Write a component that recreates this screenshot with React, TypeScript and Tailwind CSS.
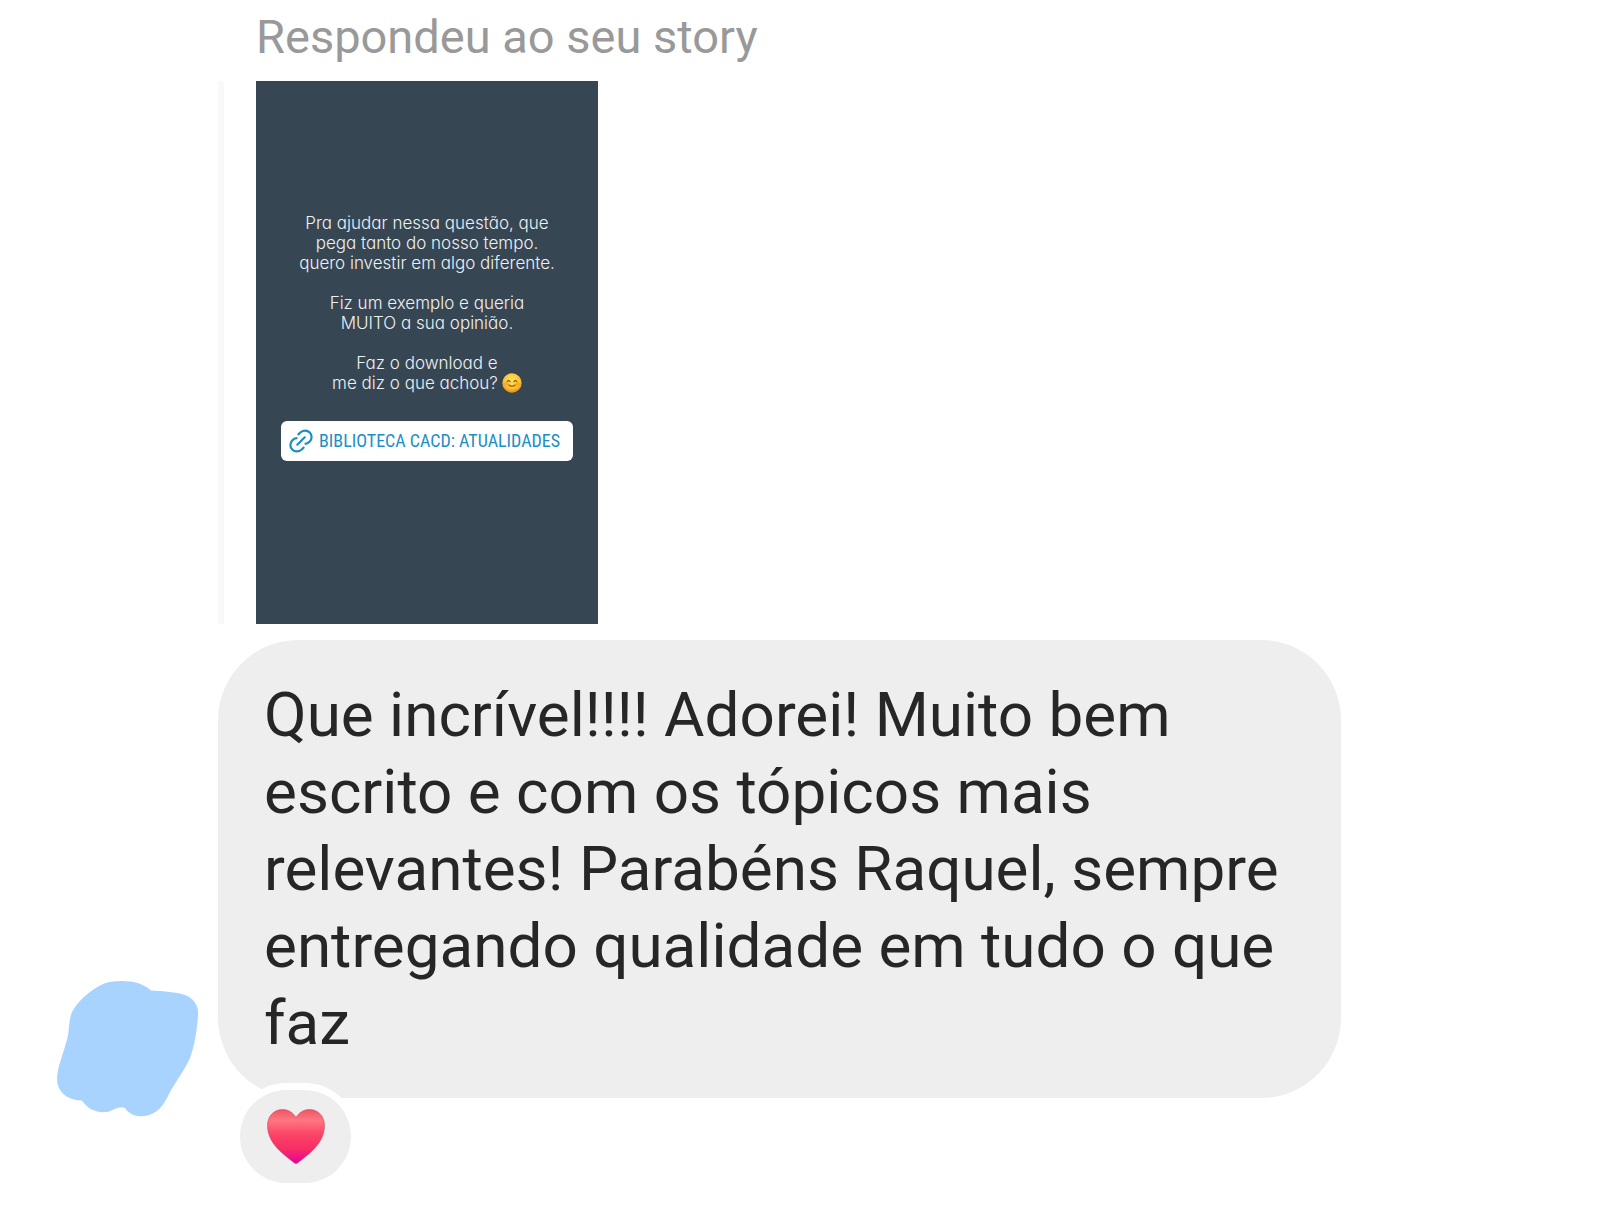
type StoryReplyProps = {
  paragraphs: string[][]
  linkLabel: string
}

const story: StoryReplyProps = {
  paragraphs: [
    [
      "Pra ajudar nessa questão, que",
      "pega tanto do nosso tempo.",
      "quero investir em algo diferente.",
    ],
    ["Fiz um exemplo e queria", "MUITO a sua opinião."],
    ["Faz o download e", "me diz o que achou?"],
  ],
  linkLabel: "BIBLIOTECA CACD: ATUALIDADES",
}

const message =
  "Que incrível!!!! Adorei! Muito bem escrito e com os tópicos mais relevantes! Parabéns Raquel, sempre entregando qualidade em tudo o que faz"

function LinkIcon() {
  return (
    <svg
      viewBox="0 0 24 24"
      className="h-6 w-6 shrink-0"
      fill="none"
      stroke="#1b8fc4"
      strokeWidth="2.2"
      strokeLinecap="round"
      aria-hidden="true"
    >
      <path d="M9.4 5.4 L11.6 3.300 C14.3 0.900 18.300 1 20.8 3.500 C23.200 6 23.200 10 20.800 12.600 C19.600 13.900 18.100 14.700 16.500 14.800" />
      <path d="M14.6 18.600 L12.400 20.700 C9.700 23.100 5.700 23 3.200 20.500 C0.800 18 0.800 14 3.200 11.400 C4.400 10.100 5.900 9.300 7.500 9.200" />
      <path d="M8.3 15.700 L15.700 8.300" />
    </svg>
  )
}

function SmileIcon() {
  return (
    <svg viewBox="0 0 21 21" className="h-5 w-5 shrink-0" role="img" aria-label="sorriso">
      <defs>
        <radialGradient id="face" cx="0.5" cy="0.35" r="0.65">
          <stop offset="0" stopColor="#ffe45c" />
          <stop offset="0.65" stopColor="#fcc133" />
          <stop offset="1" stopColor="#e88b12" />
        </radialGradient>
      </defs>
      <circle cx="10.5" cy="10.5" r="10.2" fill="url(#face)" />
      <ellipse cx="4.6" cy="11.4" rx="2.4" ry="1.6" fill="#f58b2c" opacity="0.5" />
      <ellipse cx="16.4" cy="11.4" rx="2.4" ry="1.6" fill="#f58b2c" opacity="0.5" />
      <g fill="none" stroke="#8a5512" strokeWidth="1.1" strokeLinecap="round">
        <path d="M5.400 9.200 Q7 6.800 8.600 9.200" />
        <path d="M12.400 9.200 Q14 6.800 15.600 9.200" />
        <path d="M7 12.600 Q10.5 15.200 14 12.600" />
      </g>
    </svg>
  )
}

function HeartIcon() {
  return (
    <svg viewBox="0 0 58 55" className="w-[58px]" aria-hidden="true">
      <defs>
        <linearGradient id="heart" x1="0" y1="0" x2="0" y2="1">
          <stop offset="0" stopColor="#ee5565" />
          <stop offset="0.2" stopColor="#ff7681" />
          <stop offset="0.46" stopColor="#fc4467" />
          <stop offset="0.72" stopColor="#f82f64" />
          <stop offset="1" stopColor="#e6009c" />
        </linearGradient>
      </defs>
      <path
        d="M29 8.5 C26 3.500 21.500 0.500 15.500 0.500 C6.500 0.500 0.500 7.500 0.500 16.500 C0.500 27 6 35 12 41 C17 46 23 50.500 27.500 54 Q29 55 30.500 54 C35 50.500 41 46 46 41 C52 35 57.500 27 57.500 16.500 C57.500 7.500 51.500 0.500 42.500 0.500 C36.500 0.500 32 3.500 29 8.500 Z"
        fill="url(#heart)"
        stroke="#c93a5c"
        strokeOpacity="0.5"
      />
    </svg>
  )
}

function AvatarScribble() {
  return (
    <svg viewBox="0 0 142 136" className="w-[142px]" role="img" aria-label="avatar">
      <path
        d="M66 0 C77 0 87 3 94 9.5 C105 10 117 11 125 13 C136 16 142 24 141 34 C140 49 138 63 133 77 C128 88 120 99 113 111 C108 121 104 130 92 134 C83 137 73 135 68 127 C62 124 56 130 49 131 C38 132 30 127 25 119.500 C14 119.500 3 114 0.500 103 C-1.500 90 5 77 9 62 C13 51 11 41 15 31 C21 20 32 10 45 3.500 C51 0.500 59 0 66 0 Z"
        fill="#a8d3ff"
      />
    </svg>
  )
}

function StoryReply({ paragraphs, linkLabel }: StoryReplyProps) {
  return (
    <div className="flex gap-8">
      <div className="w-1.5 bg-[#f8f9fb]" />
      <div className="flex w-[342px] flex-col items-center bg-[#374653] pt-[132px] pb-[163px]">
        <div className="flex flex-col gap-5 text-center font-['Inter',sans-serif] text-[17px] leading-5 font-light whitespace-nowrap text-[#eef1f3] [font-feature-settings:'cv11']">
          {paragraphs.map((lines, i) => (
            <div key={i}>
              {lines.map((line, j) => (
                <p key={line} className="flex items-center justify-center gap-1">
                  {line}
                  {i === paragraphs.length - 1 && j === lines.length - 1 && <SmileIcon />}
                </p>
              ))}
            </div>
          ))}
        </div>

        <a
          href="#biblioteca"
          className="mt-7 flex h-10 w-[292px] items-center gap-1.5 rounded-md bg-white px-2 font-['Roboto_Condensed','Roboto',sans-serif] text-lg whitespace-nowrap text-[#1b8fc4]"
        >
          <LinkIcon />
          {linkLabel}
        </a>
      </div>
    </div>
  )
}

export default function App() {
  return (
    <main className="min-h-screen bg-white pt-2.5 pr-[259px] pl-[57px] font-['Roboto',sans-serif]">
      <div className="pl-[161px]">
        <h1 className="mb-[17px] pl-[38px] text-[47px] leading-[54px] text-[#999999]">
          Respondeu ao seu story
        </h1>
        <StoryReply {...story} />
      </div>

      <div className="mt-4 flex items-end gap-[19px]">
        <div className="mb-[66px] shrink-0">
          <AvatarScribble />
        </div>

        <div className="min-w-0 flex-1">
          <p className="rounded-[80px] bg-[#eeeeee] px-[46px] pt-9 pb-[37px] text-[62px] leading-[77px] text-[#262626]">
            {message}
          </p>
          {/* reaction */}
          <button
            type="button"
            aria-label="Curtida"
            className="relative -mt-2 ml-[22px] flex h-[93px] w-[111px] items-center justify-center rounded-full bg-[#eeeeee] ring-7 ring-white"
          >
            <HeartIcon />
          </button>
        </div>
      </div>
    </main>
  )
}
